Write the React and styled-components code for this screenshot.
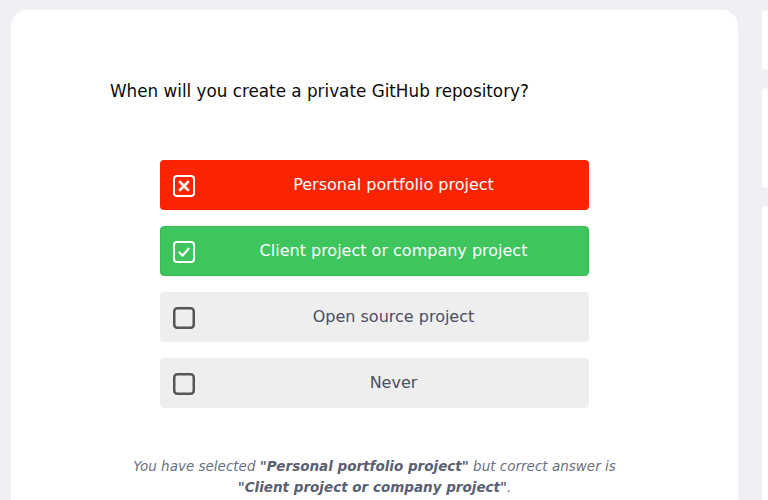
import React from "react";
import styled, { createGlobalStyle } from "styled-components";

const GlobalStyle = createGlobalStyle`
  body {
    margin: 0;
    background: #eff0f4;
    font-family: "DejaVu Sans", "Open Sans", sans-serif;
  }
`;

const options = [
  { label: "Personal portfolio project", state: "wrong" },
  { label: "Client project or company project", state: "right" },
  { label: "Open source project", state: "idle" },
  { label: "Never", state: "idle" },
];

const CheckIcon = ({ state }) => {
  if (state === "wrong") {
    return (
      <svg width="22" height="22" viewBox="0 0 22 22">
        <rect x="1" y="1" width="20" height="20" rx="3" fill="none" stroke="#fff" strokeWidth="2" />
        <path d="M7 7 L15 15 M15 7 L7 15" stroke="#fff" strokeWidth="2.6" strokeLinecap="round" />
      </svg>
    );
  }
  if (state === "right") {
    return (
      <svg width="22" height="22" viewBox="0 0 22 22">
        <rect x="1" y="1" width="20" height="20" rx="3" fill="none" stroke="#fff" strokeWidth="2" />
        <path d="M6.5 11.5 L9.6 14.6 L15.6 7.6" fill="none" stroke="#fff" strokeWidth="2.2" strokeLinecap="round" strokeLinejoin="round" />
      </svg>
    );
  }
  return (
    <svg width="22" height="22" viewBox="0 0 22 22">
      <rect x="1.25" y="1.25" width="19.5" height="19.5" rx="3" fill="none" stroke="#555" strokeWidth="2.5" />
    </svg>
  );
};

const App = () => {
  return (
    <>
      <GlobalStyle />
      <Page>
        <QuizCard>
          <Question>When will you create a private GitHub repository?</Question>
          <OptionList>
            {options.map((opt) => (
              <Option key={opt.label} state={opt.state}>
                <IconSlot>
                  <CheckIcon state={opt.state} />
                </IconSlot>
                <OptionLabel>{opt.label}</OptionLabel>
              </Option>
            ))}
          </OptionList>
          <Feedback>
            You have selected <b>"Personal portfolio project"</b> but correct answer is
            <br />
            <b>"Client project or company project"</b>.
          </Feedback>
        </QuizCard>
        <Sidebar>
          <SideCard height="60px" />
          <SideCard height="100px" />
          <SideCard height="300px" />
        </Sidebar>
      </Page>
    </>
  );
};
export default App;

const Page = styled.div`
  display: flex;
  gap: 24px;
  padding: 10px 0 0 11px;
  height: 500px;
  box-sizing: border-box;
  overflow: hidden;
`;

const QuizCard = styled.div`
  flex: 0 0 727px;
  background: #fff;
  border-radius: 16px;
  padding: 69px 0 0;
  box-sizing: border-box;
  height: 520px;
`;

const Question = styled.h2`
  margin: 0 0 57px 99px;
  font-size: 16.8px;
  line-height: 24px;
  font-weight: 400;
  color: #0a0a0a;
`;

const OptionList = styled.div`
  width: 429px;
  margin: 0 auto;
  display: flex;
  flex-direction: column;
  gap: 16px;
`;

const bg = { wrong: "#fa2500", right: "#3ec55d", idle: "#eeeeee" };

const Option = styled.div`
  display: flex;
  align-items: center;
  height: 50px;
  border-radius: 4px;
  background: ${(p) => bg[p.state]};
  color: ${(p) => (p.state === "idle" ? "#4a4f63" : "#fff")};
  border: 1px solid ${(p) => (p.state === "right" ? "#37b853" : "transparent")};
  box-sizing: border-box;
  padding: 0 0 0 12px;
`;

const IconSlot = styled.span`
  display: flex;
  width: 22px;
  height: 22px;
  margin-top: 2px;
`;

const OptionLabel = styled.span`
  flex: 1;
  text-align: center;
  font-size: 16px;
  margin-left: 4px;
  margin-top: -2px;
`;

const Feedback = styled.p`
  margin: 48px 0 0;
  text-align: center;
  font-style: italic;
  font-size: 13.5px;
  line-height: 21px;
  color: #6b7080;

  b {
    font-weight: 700;
    color: #5a6072;
  }
`;

const Sidebar = styled.div`
  flex: 1;
  display: flex;
  flex-direction: column;
  gap: 18px;
`;

const SideCard = styled.div`
  height: ${(p) => p.height};
  background: #fff;
  border-radius: 12px;
  flex-shrink: 0;
`;
